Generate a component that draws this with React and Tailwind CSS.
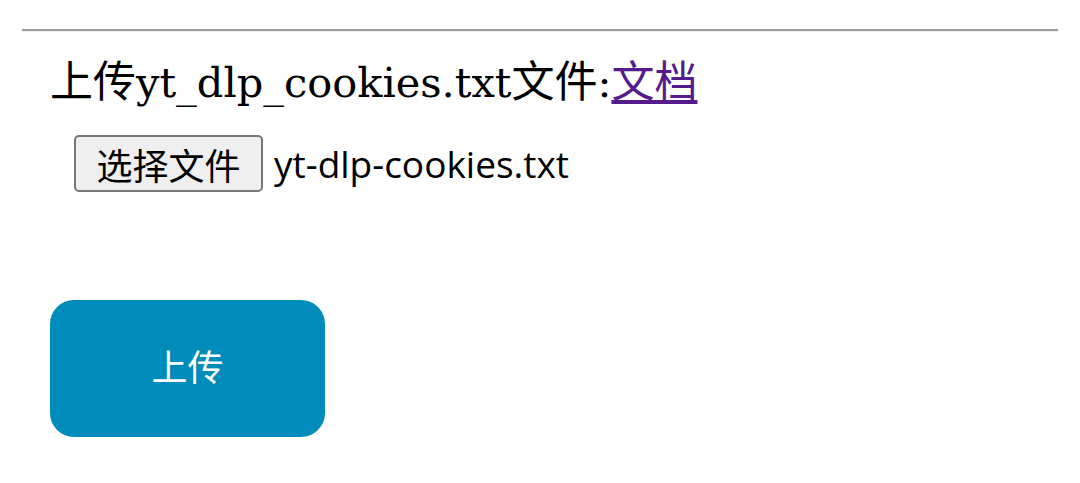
export default function App() {
  return (
    <div className="w-[1080px] h-[483px] bg-white pt-[29px]">
      <div className="mx-[22px] h-[3px] border-t-2 border-[#9a9a9a] border-b border-b-[#eeeeee]" />
      <div className="px-[50px] pt-[20px]">
        <div className="text-[41.5px] leading-[52px] text-black font-['DejaVu_Serif','Noto_Sans_CJK_SC',serif]">
          <span className="text-[43px] font-['Noto_Sans_CJK_SC',sans-serif]">上传</span>
          yt_dlp_cookies.txt
          <span className="text-[43px] font-['Noto_Sans_CJK_SC',sans-serif]">文件</span>:
          <a href="#" className="text-[#551a8b] underline text-[43px] font-['Noto_Sans_CJK_SC',sans-serif]">文档</a>
        </div>
        <div className="flex items-center mt-[26px] ml-[24px] gap-[11px]">
          <button className="h-[57px] w-[189px] rounded-[5px] border-2 border-[#767676] bg-[#efefef] text-[36px] text-black flex items-center justify-center font-['Noto_Sans_CJK_SC',sans-serif]">
            选择文件
          </button>
          <span className="text-[37px] text-black font-['Open_Sans',sans-serif]">yt-dlp-cookies.txt</span>
        </div>
        <button className="mt-[108px] w-[275px] h-[137px] rounded-[24px] bg-[#008cba] text-white text-[36px] font-['Noto_Sans_CJK_SC',sans-serif] flex items-center justify-center pb-[8px]">
          上传
        </button>
      </div>
    </div>
  );
}
